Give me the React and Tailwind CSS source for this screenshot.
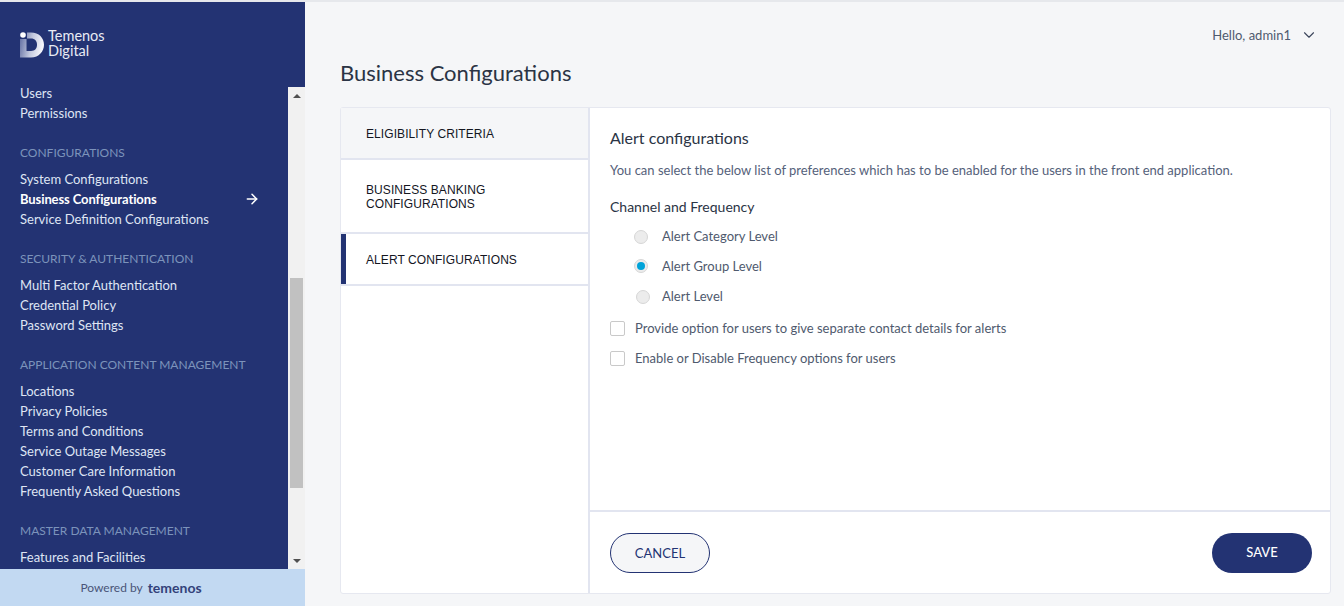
import React from 'react'
import { ChevronDown, ArrowRight } from 'lucide-react'

const lato = { fontFamily: 'Lato, sans-serif' }

const navGroups = [
  { items: ['Users', 'Permissions'] },
  { title: 'CONFIGURATIONS', items: ['System Configurations', 'Business Configurations', 'Service Definition Configurations'] },
  { title: 'SECURITY & AUTHENTICATION', items: ['Multi Factor Authentication', 'Credential Policy', 'Password Settings'] },
  {
    title: 'APPLICATION CONTENT MANAGEMENT',
    items: ['Locations', 'Privacy Policies', 'Terms and Conditions', 'Service Outage Messages', 'Customer Care Information', 'Frequently Asked Questions'],
  },
  { title: 'MASTER DATA MANAGEMENT', items: ['Features and Facilities'] },
]

const Logo = () => (
  <svg width="24" height="26" viewBox="0 0 24 26">
    <defs>
      <linearGradient id="logoFill" x1="0" y1="0" x2="1" y2="0.2">
        <stop offset="0%" stopColor="#5d6a9f" />
        <stop offset="55%" stopColor="#c3c9de" />
        <stop offset="100%" stopColor="#f4f5fa" />
      </linearGradient>
    </defs>
    <path d="M0 7 V25.5 H11 C19 25.5 24 19.5 24 12.8 C24 6 19 0.5 11 0.5 H7 V6.5 H11 C15 6.5 17 9 17 12.8 C17 16.5 15 19 11 19 H6.5 V7 Z" fill="url(#logoFill)" />
    <circle cx="3" cy="3" r="2.8" fill="#ffffff" />
  </svg>
)

const Sidebar = () => (
  <aside className="w-[305px] h-full shrink-0 flex flex-col bg-[#233373]">
    <div className="h-[85px] shrink-0 flex pl-5 pt-[30px]">
      <Logo />
      <div className="ml-[4px] -mt-[4px] text-[14.5px] leading-[15px] text-[#e8ebf4]">
        Temenos
        <br />
        Digital
      </div>
    </div>
    <div className="flex-1 min-h-0 flex">
      <nav className="flex-1 overflow-hidden pl-5 -mt-[4px]">
        {navGroups.map((group, i) => (
          <div key={i} className="mb-[20px]">
            {group.title && (
              <div className="h-5 mb-[6px] text-[12px] leading-5 text-[#7c93bb]">
                {group.title}
              </div>
            )}
            {group.items.map(item => {
              const active = item === 'Business Configurations'
              return (
                <div key={item} className={`h-5 w-[240px] flex items-center justify-between text-[13px] leading-5 ${active ? 'text-white font-bold' : 'text-[#dfe5f3]'}`}>
                  <span className={active ? 'tracking-[-0.1px]' : ''}>{item}</span>
                  {active && <ArrowRight size={16} strokeWidth={2.25} className="text-white" />}
                </div>
              )
            })}
          </div>
        ))}
      </nav>
      <div className="w-[17px] shrink-0 flex flex-col bg-[#f1f1f1]">
        <div className="h-[17px] flex items-center justify-center">
          <div className="w-0 h-0 border-x-[4px] border-x-transparent border-b-[4px] border-b-[#505050]" />
        </div>
        <div className="flex-1 pt-[174px] pb-[64px] px-[2px]">
          <div className="h-full bg-[#c1c1c1]" />
        </div>
        <div className="h-[17px] flex items-center justify-center">
          <div className="w-0 h-0 border-x-[4px] border-x-transparent border-t-[4px] border-t-[#505050]" />
        </div>
      </div>
    </div>
    <div className="h-[37px] shrink-0 bg-[#c2d9f2] flex items-center justify-center gap-[5px] pr-[23px]">
      <span className="text-[12px] text-[#4a5578]">Powered by</span>
      <span className="text-[14px] font-bold text-[#33427a] -mt-[1px]">temenos</span>
    </div>
  </aside>
)

const tabs = [
  { label: 'ELIGIBILITY CRITERIA', height: 'h-[52px]', bg: 'bg-[#f5f6f8]' },
  { label: 'BUSINESS BANKING CONFIGURATIONS', height: 'h-[74px]', bg: 'bg-white' },
  { label: 'ALERT CONFIGURATIONS', height: 'h-[52px]', bg: 'bg-white', active: true },
]

const Radio = ({ label, checked, dotClass }) => (
  <div className="h-[30px] flex items-center pl-[24px]">
    <span className={`w-[14px] h-[14px] rounded-full bg-[#ececec] border border-[#d6d6d6] flex items-center justify-center ${dotClass || ''}`}>
      {checked && <span className="w-2 h-2 rounded-full bg-[#00a3d9]" />}
    </span>
    <span className="ml-[14px] text-[13px] text-[#4f5a6e]">{label}</span>
  </div>
)

const Check = ({ label }) => (
  <div className="h-[30px] flex items-center">
    <span className="w-[15px] h-[15px] -mt-[2px] rounded-[2px] border border-[#c9c9c9] bg-white" />
    <span className="ml-[10px] text-[13px] text-[#4f5a6e]">{label}</span>
  </div>
)

export default function App() {
  return (
    <div className="w-[1344px] h-[606px] overflow-hidden bg-[#f5f6f8] border-t-2 border-[#e6e8ec] flex" style={lato}>
      <Sidebar />
      <main className="flex-1 min-w-0 flex flex-col pl-[35px] pr-[13px] pb-[12px]">
        <div className="h-[70px] shrink-0 relative">
          <div className="absolute right-[13px] top-[24px] flex items-center gap-[9px] text-[13px] leading-4 text-[#4f5a6e]">
            Hello, admin1
            <ChevronDown size={18} strokeWidth={1.5} className="text-[#3c465c]" />
          </div>
          <h1 className="absolute left-0 top-[58px] text-[22px] leading-[26px] font-normal text-[#2b3445]">Business Configurations</h1>
        </div>
        <div className="mt-[35px] flex-1 min-h-0 flex bg-white border border-[#e6e8f0] rounded-[3px]">
          <div className="w-[249px] shrink-0 border-r-2 border-[#e2e5f0]">
            {tabs.map(tab => (
              <div key={tab.label} className={`${tab.height} ${tab.bg} relative flex items-center border-b-2 border-[#e2e5f0] pl-[25px] pr-[40px] pt-[2px] text-[12px] leading-[14px] tracking-[0.08px] text-[#14161f]`} style={{ fontFamily: '"Liberation Sans", sans-serif' }}>
                {tab.active && <span className="absolute left-0 top-0 bottom-0 w-[5px] bg-[#233373]" />}
                {tab.label}
              </div>
            ))}
          </div>
          <div className="flex-1 min-w-0 flex flex-col">
            <div className="flex-1 min-h-0 pl-[20px] pt-[20px]">
              <h2 className="text-[16px] leading-5 font-normal text-[#2b3445]">Alert configurations</h2>
              <p className="mt-[12px] text-[13px] leading-5 text-[#55617a]">You can select the below list of preferences which has to be enabled for the users in the front end application.</p>
              <h3 className="mt-[17px] text-[14px] leading-5 font-normal text-[#2b3445]">Channel and Frequency</h3>
              <div className="mt-[5px]">
                <Radio label="Alert Category Level" dotClass="-mt-[1px]" />
                <Radio label="Alert Group Level" checked dotClass="-mt-[2px]" />
                <Radio label="Alert Level" dotClass="-mt-[1px] ml-[2px] mr-[-2px]" />
              </div>
              <div className="mt-[2px]">
                <Check label="Provide option for users to give separate contact details for alerts" />
                <Check label="Enable or Disable Frequency options for users" />
              </div>
            </div>
            <div className="h-[83px] shrink-0 border-t-2 border-[#e2e5f0] flex items-center justify-between pl-[20px] pr-[18px]">
              <button className="w-[100px] h-10 pt-[2px] rounded-full border border-[#233373] bg-[#f5f6f8] text-[13px] text-[#233373]">CANCEL</button>
              <button className="w-[100px] h-10 rounded-full bg-[#233373] text-[13px] font-medium text-white">SAVE</button>
            </div>
          </div>
        </div>
      </main>
    </div>
  )
}
